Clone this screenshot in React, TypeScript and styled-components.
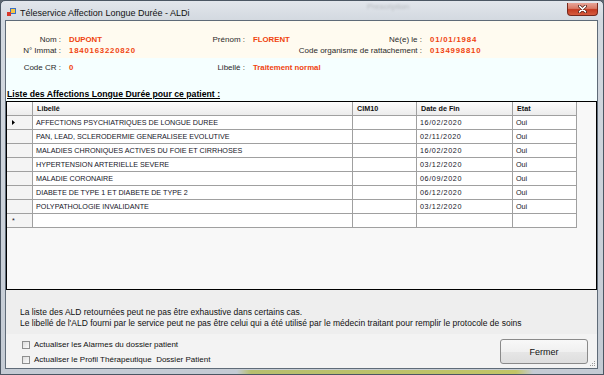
import React from 'react'
import styled, { createGlobalStyle } from 'styled-components'

type Ald = {
  libelle: string,
  cim10: string,
  dateFin: string,
  etat: string
}

const alds: Ald[] = [
  { libelle: 'AFFECTIONS PSYCHIATRIQUES DE LONGUE DUREE', cim10: '', dateFin: '16/02/2020', etat: 'Oui' },
  { libelle: 'PAN, LEAD, SCLERODERMIE GENERALISEE EVOLUTIVE', cim10: '', dateFin: '02/11/2020', etat: 'Oui' },
  { libelle: 'MALADIES CHRONIQUES ACTIVES DU FOIE ET CIRRHOSES', cim10: '', dateFin: '16/02/2020', etat: 'Oui' },
  { libelle: 'HYPERTENSION ARTERIELLE SEVERE', cim10: '', dateFin: '03/12/2020', etat: 'Oui' },
  { libelle: 'MALADIE CORONAIRE', cim10: '', dateFin: '06/09/2020', etat: 'Oui' },
  { libelle: 'DIABETE DE TYPE 1 ET DIABETE DE TYPE 2', cim10: '', dateFin: '06/12/2020', etat: 'Oui' },
  { libelle: 'POLYPATHOLOGIE INVALIDANTE', cim10: '', dateFin: '03/12/2020', etat: 'Oui' },
]

const GlobalStyle = createGlobalStyle`
  html, body {
    margin: 0;
    padding: 0;
    background: #5d6670;
  }
  body {
    font-family: 'Liberation Sans', Arial, sans-serif;
  }
  * {
    box-sizing: border-box;
  }
`

const Window = styled.div`
  position: relative;
  width: 604px;
  height: 375px;
  display: flex;
  flex-direction: column;
  padding: 0 5px 5px 4px;
  border: 1px solid #4b5663;
  border-radius: 5px 5px 0 0;
  overflow: hidden;
  background:
    linear-gradient(to right, transparent 236px, #b7bf6e 250px, #c2c566 515px, transparent 532px) left bottom / 100% 4px no-repeat,
    linear-gradient(#e2e6ec 0, #d3d9e0 19px, #c4cbd4 100%);
`

// title bar
const TitleBar = styled.div`
  position: relative;
  height: 19px;
  flex-shrink: 0;
  display: flex;
  align-items: flex-start;
`
const AppIcon = styled.svg`
  flex-shrink: 0;
  margin: 7px 4px 0 2px;
`
const Title = styled.span`
  margin-top: 6px;
  font-size: 9px;
  line-height: 12px;
  color: #111;
  white-space: nowrap;
`
const GhostTitle = styled.span`
  position: absolute;
  left: 362px;
  top: 1px;
  font-size: 8px;
  color: rgba(30, 30, 30, 0.22);
  filter: blur(0.8px);
`
const CloseButton = styled.div`
  margin: 2px 0 0 auto;
  width: 31px;
  height: 13px;
  display: flex;
  align-items: center;
  justify-content: center;
  border: 1px solid #76281c;
  border-top: none;
  border-radius: 0 0 4px 4px;
  background: linear-gradient(#e7a497 0, #d97a66 45%, #c43a20 55%, #d65c3f 100%);
`

// client area
const Client = styled.div`
  flex: 1;
  min-height: 0;
  display: flex;
  flex-direction: column;
  border: 1px solid #5f6b78;
  background: #f0f0f0;
`
const PatientHeader = styled.div`
  height: 37px;
  flex-shrink: 0;
  padding-top: 13px;
  background: #fffbf0;
`
const CrPanel = styled.div`
  height: 43px;
  flex-shrink: 0;
  padding-top: 4px;
  background: #f5ffff;
`
const InfoGrid = styled.div`
  display: grid;
  grid-template-columns: 63px 117px 67px 43px 134px 1fr;
  grid-auto-rows: 11px;
  align-items: center;
`
const FieldLabel = styled.span<{ $col?: number }>`
  grid-column: ${({ $col }) => ($col ? `${$col}` : 'auto')};
  justify-self: end;
  padding-right: 8px;
  font-size: 8px;
  line-height: 11px;
  color: #2a2a2a;
  white-space: nowrap;
`
const FieldValue = styled.span<{ $spaced?: boolean }>`
  font-size: 7.8px;
  line-height: 11px;
  font-weight: bold;
  color: #f0430f;
  white-space: nowrap;
  letter-spacing: ${({ $spaced }) => ($spaced ? '0.8px' : '0')};
`
const SectionTitle = styled.div`
  margin-top: 16px;
  padding-left: 1px;
  font-size: 8.7px;
  line-height: 11px;
  font-weight: bold;
  text-decoration: underline;
  color: #000;
  white-space: nowrap;
`

// grid
const DataGrid = styled.div`
  height: 189px;
  flex-shrink: 0;
  border: 1px solid #000;
  background: #f8f8f8;
`
const GridRow = styled.div`
  display: grid;
  grid-template-columns: 26px 320px 64px 96px 64px;
  height: 14px;
`
const Cell = styled.div<{ $spaced?: boolean }>`
  padding-left: 3px;
  border-right: 1px solid #a0a0a0;
  border-bottom: 1px solid #a0a0a0;
  background: #fff;
  font-size: 7.2px;
  line-height: 13px;
  color: #15151f;
  white-space: nowrap;
  overflow: hidden;
  letter-spacing: ${({ $spaced }) => ($spaced ? '0.6px' : '0')};
`
const HeaderCell = styled(Cell)`
  padding-left: 4px;
  background: linear-gradient(#fdfdfd, #ececec);
  font-weight: bold;
  color: #111;
`
const RowHeader = styled(Cell)`
  display: flex;
  align-items: center;
  padding-left: 5px;
  background: #f4f4f4;
`

// notes and footer
const Notes = styled.div`
  height: 44px;
  flex-shrink: 0;
  padding: 17px 0 0 14px;
  font-size: 8.5px;
  line-height: 11px;
  color: #111;
  background: #eeeeee;
  white-space: nowrap;
`
const Footer = styled.div`
  position: relative;
  flex: 1;
  display: flex;
  justify-content: space-between;
  align-items: flex-start;
  padding: 3px 9px 0 16px;
  background: #f3f3f3;
`
const CheckList = styled.div`
  display: flex;
  flex-direction: column;
`
const CheckRow = styled.label`
  display: flex;
  align-items: center;
  gap: 4px;
  height: 15px;
  font-size: 8px;
  color: #111;
  white-space: nowrap;
`
const CheckBox = styled.span`
  flex-shrink: 0;
  width: 8px;
  height: 8px;
  border: 1px solid #8e8f8f;
  background: linear-gradient(135deg, #dedede, #fbfbfb);
`
const Button = styled.button`
  margin-top: 2px;
  width: 88px;
  height: 25px;
  border: 1px solid #8a8a8a;
  border-radius: 3px;
  background: linear-gradient(#f8f8f8 0, #f0f0f0 50%, #e6e6e6 51%, #dedede 100%);
  font-family: 'Liberation Sans', Arial, sans-serif;
  font-size: 9px;
  color: #111;
`
const Grip = styled.svg`
  position: absolute;
  right: 1px;
  bottom: 1px;
`

const App = () => {
  return (
    <>
      <GlobalStyle />
      <Window>
        <TitleBar>
          <AppIcon width="9" height="9" viewBox="0 0 9 9">
            <rect x="3.5" y="0.5" width="5" height="5" fill="#f7c640" stroke="#3a6fc2" />
            <rect x="0" y="4" width="4" height="4" fill="#d9382a" />
          </AppIcon>
          <Title>Téleservice Affection Longue Durée - ALDi</Title>
          <GhostTitle>Prescription</GhostTitle>
          <CloseButton>
            <svg width="9" height="8" viewBox="0 0 9 8">
              <path d="M1.5 1.2 L7.5 6.8 M7.5 1.2 L1.5 6.8" stroke="#4a1a12" strokeWidth="3" strokeLinecap="round" />
              <path d="M1.5 1.2 L7.5 6.8 M7.5 1.2 L1.5 6.8" stroke="#fff" strokeWidth="1.6" strokeLinecap="round" />
            </svg>
          </CloseButton>
        </TitleBar>

        <Client>
          <PatientHeader>
            <InfoGrid>
              <FieldLabel>Nom :</FieldLabel>
              <FieldValue>DUPONT</FieldValue>
              <FieldLabel>Prénom :</FieldLabel>
              <FieldValue>FLORENT</FieldValue>
              <FieldLabel>Né(e) le :</FieldLabel>
              <FieldValue $spaced>01/01/1984</FieldValue>

              <FieldLabel>N° Immat :</FieldLabel>
              <FieldValue $spaced>1840163220820</FieldValue>
              <FieldLabel $col={5}>Code organisme de rattachement :</FieldLabel>
              <FieldValue $spaced>0134998810</FieldValue>
            </InfoGrid>
          </PatientHeader>

          <CrPanel>
            <InfoGrid>
              <FieldLabel>Code CR :</FieldLabel>
              <FieldValue>0</FieldValue>
              <FieldLabel>Libellé :</FieldLabel>
              <FieldValue>Traitement normal</FieldValue>
            </InfoGrid>
            <SectionTitle>Liste des Affections Longue Durée pour ce patient :</SectionTitle>
          </CrPanel>

          <DataGrid>
            <GridRow>
              <HeaderCell />
              <HeaderCell>Libellé</HeaderCell>
              <HeaderCell>CIM10</HeaderCell>
              <HeaderCell>Date de Fin</HeaderCell>
              <HeaderCell>Etat</HeaderCell>
            </GridRow>
            {alds.map((ald, i) => (
              <GridRow key={ald.libelle}>
                <RowHeader>
                  {i === 0 && (
                    <svg width="3" height="5" viewBox="0 0 3 5">
                      <path d="M0 0 L3 2.5 L0 5 Z" fill="#000" />
                    </svg>
                  )}
                </RowHeader>
                <Cell>{ald.libelle}</Cell>
                <Cell>{ald.cim10}</Cell>
                <Cell $spaced>{ald.dateFin}</Cell>
                <Cell>{ald.etat}</Cell>
              </GridRow>
            ))}
            <GridRow>
              <RowHeader>*</RowHeader>
              <Cell />
              <Cell />
              <Cell />
              <Cell />
            </GridRow>
          </DataGrid>

          <Notes>
            <div>La liste des ALD retournées peut ne pas être exhaustive dans certains cas.</div>
            <div>Le libellé de l'ALD fourni par le service peut ne pas être celui qui a été utilisé par le médecin traitant pour remplir le protocole de soins</div>
          </Notes>

          <Footer>
            <CheckList>
              <CheckRow>
                <CheckBox />
                Actualiser les Alarmes du dossier patient
              </CheckRow>
              <CheckRow>
                <CheckBox />
                Actualiser le Profil Thérapeutique&nbsp; Dossier Patient
              </CheckRow>
            </CheckList>
            <Button>Fermer</Button>
            <Grip width="7" height="7" viewBox="0 0 7 7">
              <rect x="5" y="1" width="1" height="1" fill="#9a9a9a" />
              <rect x="3" y="3" width="1" height="1" fill="#9a9a9a" />
              <rect x="5" y="3" width="1" height="1" fill="#9a9a9a" />
              <rect x="1" y="5" width="1" height="1" fill="#9a9a9a" />
              <rect x="3" y="5" width="1" height="1" fill="#9a9a9a" />
              <rect x="5" y="5" width="1" height="1" fill="#9a9a9a" />
            </Grip>
          </Footer>
        </Client>
      </Window>
    </>
  )
}

export default App
